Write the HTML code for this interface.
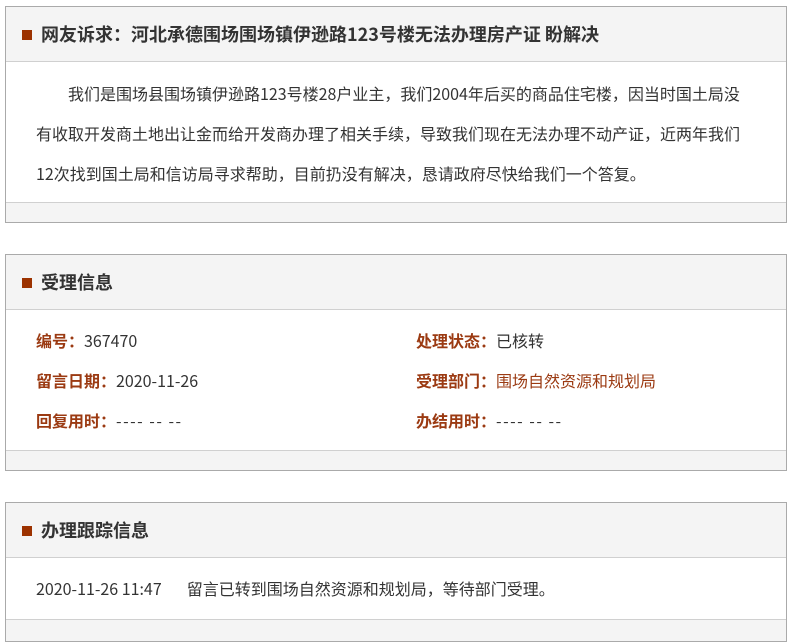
<!DOCTYPE html>
<html><head><meta charset="utf-8"><style>
*{margin:0;padding:0;box-sizing:border-box}
body{width:790px;height:625px;overflow:hidden;background:#fff;font-family:"Noto Sans CJK SC","Liberation Sans",sans-serif;color:#333}
.box{position:absolute;left:5px;width:782px;border:1px solid #aaa;background:#f4f4f4}
.hd{height:55px;border-bottom:1px solid #d0d0d0;position:relative;font-size:18px;font-weight:bold;line-height:55px;padding-left:35px;color:#333}
.hd:before{content:"";position:absolute;left:16px;top:23px;width:10px;height:10px;background:#9c3200}
.bd{background:#fff;border-bottom:1px solid #d0d0d0;font-size:16px}
.p{padding:11px 10px 0 30px;line-height:40px;height:141px;white-space:nowrap}
.lb{color:#9b3a12;font-weight:bold}
.row{position:absolute;font-size:16px;line-height:20px}
.d{letter-spacing:1.5px}
</style></head><body>
<div class="box" style="top:6px;height:217px">
<div class="hd">网友诉求：河北承德围场围场镇伊逊路123号楼无法办理房产证 盼解决</div>
<div class="bd p">&emsp;&emsp;我们是围场县围场镇伊逊路123号楼28户业主，我们2004年后买的商品住宅楼，因当时国土局没<br>有收取开发商土地出让金而给开发商办理了相关手续，导致我们现在无法办理不动产证，近两年我们<br>12次找到国土局和信访局寻求帮助，目前扔没有解决，恳请政府尽快给我们一个答复。</div>
</div>
<div class="box" style="top:254px;height:217px">
<div class="hd">受理信息</div>
<div class="bd" style="height:141px;position:relative">
<div class="row" style="left:30px;top:20px"><span class="lb">编号：</span>367470</div>
<div class="row" style="left:30px;top:60px"><span class="lb">留言日期：</span>2020-11-26</div>
<div class="row" style="left:30px;top:100px"><span class="lb">回复用时：</span><span class="d">---- -- --</span></div>
<div class="row" style="left:410px;top:20px"><span class="lb">处理状态：</span>已核转</div>
<div class="row" style="left:410px;top:60px"><span class="lb">受理部门：</span><span style="color:#9b3a12">围场自然资源和规划局</span></div>
<div class="row" style="left:410px;top:100px"><span class="lb">办结用时：</span><span class="d">---- -- --</span></div>
</div>
</div>
<div class="box" style="top:502px;height:140px">
<div class="hd">办理跟踪信息</div>
<div class="bd" style="height:62px;line-height:60px;padding-left:30px">2020-11-26 11:47<span style="display:inline-block;width:25px"></span>留言已转到围场自然资源和规划局，等待部门受理。</div>
</div>
</body></html>
